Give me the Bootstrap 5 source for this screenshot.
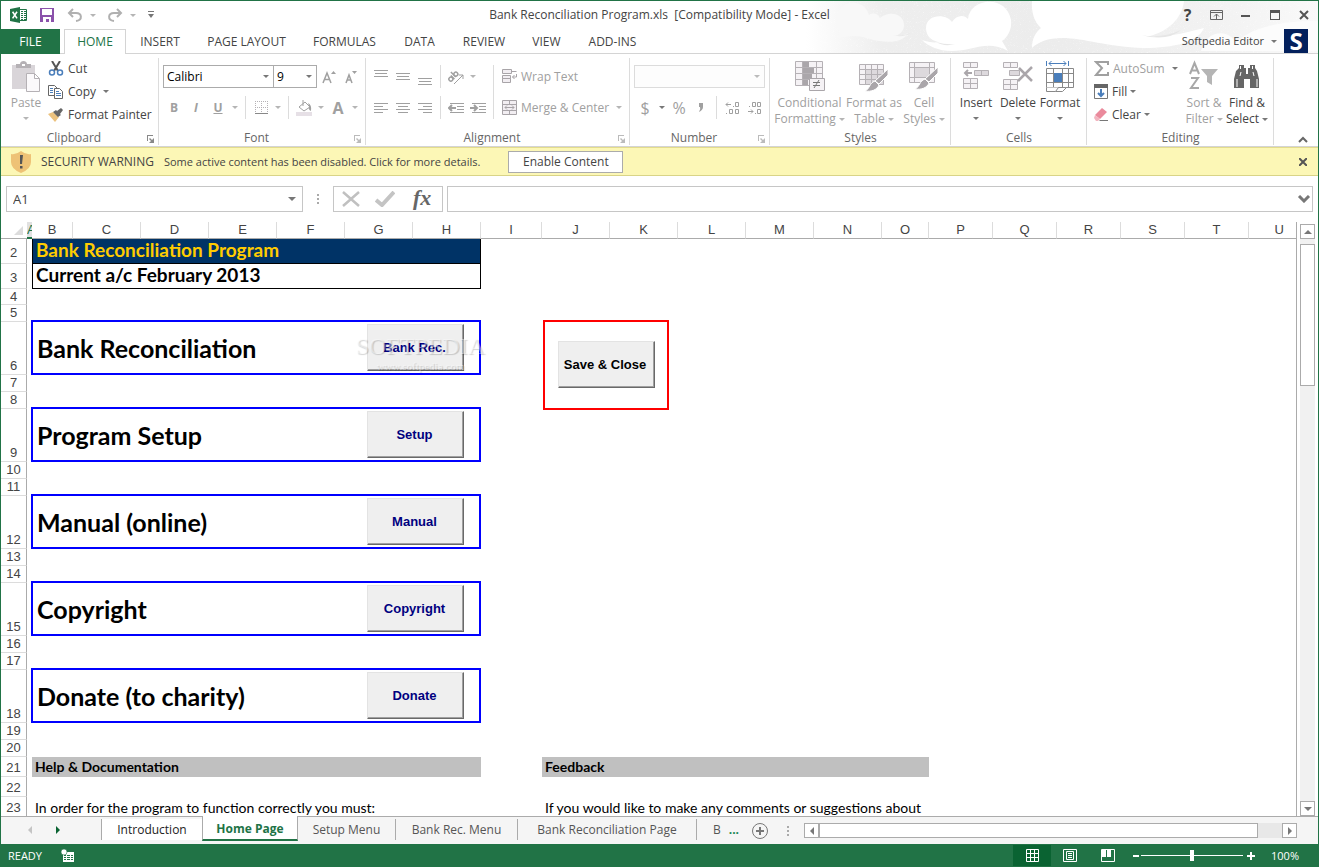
<!DOCTYPE html>
<html lang="en">
<head>
<meta charset="utf-8">
<meta name="viewport" content="width=device-width, initial-scale=1">
<title>Bank Reconciliation Program.xls [Compatibility Mode] - Excel</title>
<link href="https://cdn.jsdelivr.net/npm/bootstrap@5.3.0/dist/css/bootstrap.min.css" rel="stylesheet">
<style>
:root{--green:#217346;--line:#d4d4d4;--dim:#a0a0a0;--ink:#444}
body{font:12px/16px "Open Sans","Noto Sans",sans-serif;color:var(--ink);background:#fff}
.app{border:1px solid var(--green);border-bottom:0}
button,select,input{font:inherit;color:inherit}
.flat{background:none;border:0;padding:0}
.flat:disabled,.dim{color:var(--dim)}
svg{display:block;flex:none}
.dd{width:12px;flex:none;display:flex;justify-content:center}
.dd::after,.caret::after{content:"";border:3px solid transparent;border-top-color:#777;border-bottom:0}
.dim .dd::after,.dd.dim::after,.dim.caret::after{border-top-color:#b5b5b5}
.dim .dd.strong::after{border-top-color:#777}
.caret{display:inline-flex;align-items:center;justify-content:center;gap:3px}
/* title bar */
.topband{background:#fff}
.clouds{right:0;top:0;width:512px;height:52px;z-index:0}
.titlebar{grid-template-columns:1fr auto 1fr;height:28px}
.qat{padding-left:6px}
.w16{width:24px}.wbtn{width:29px;height:28px}
.ctr{display:flex;align-items:center;justify-content:center}
.tabrow{height:25px;border-bottom:1px solid var(--line)}
.rtabs{display:grid;grid-template-columns:59px 4px 62px 68px 105px 91px 59px 70px 55px 77px}
.rtabs a{color:var(--ink);text-decoration:none;display:flex;align-items:center;justify-content:center;height:25px}
.rtabs a.file{background:var(--green);color:#fff}
.rtabs a.on{background:#fff;color:var(--green);border:1px solid var(--line);border-bottom:0}
.who{padding-right:10px}
.slogo{width:24px;height:24px;background:#03205c;color:#fff;font:bold 24px/24px "Open Sans",sans-serif}
/* ribbon */
.ribbon{display:grid;grid-template-columns:158px 207px 264px 140px 181px 136px 187px 1fr;height:93px;border-bottom:1px solid var(--line)}
.rgroup{display:flex;flex-direction:column;justify-content:space-between;position:relative;padding-bottom:3px}
.rgroup:not(:last-child)::after{content:"";position:absolute;right:0;top:4px;bottom:4px;width:1px;background:#dcdcdc}
.gname{text-align:center;color:#666;height:16px;position:relative}
.gname span{padding-right:12px}
.launch{position:absolute;right:4px;top:5px}
.srow{height:23px;display:flex;align-items:center}
.pad3{padding:3px 0 0 3px}.padb{padding:3px 0 0 5px}.pade{padding:3px 0 0 7px}.pad4{padding:11px 0 0 4px}.gap8{gap:8px}
.ib{width:22px;height:22px}
.vsep{width:1px;background:#dcdcdc;margin:0 4px;align-self:stretch}
.big{display:flex;flex-direction:column;align-items:center;line-height:16px;height:73px}
.big svg{margin:4px 0 3px;overflow:visible}
.big .caret:empty{height:14px}
.w40{width:40px}.w42{width:42px}.w44{width:44px}.w60{width:60px}.w69{width:69px}
.sbtn{display:flex;align-items:center;gap:4px;text-align:left;height:23px}
.combo{appearance:none;border:1px solid #ababab;border-radius:0;height:23px;padding:0 14px 0 3px;color:#000;opacity:1;
 background:#fff url("data:image/svg+xml,%3Csvg xmlns='http://www.w3.org/2000/svg' width='6' height='3'%3E%3Cpath d='M0 0h6L3 3z' fill='%23777'/%3E%3C/svg%3E") no-repeat right 4px center}
.combo:disabled{border-color:#dcdcdc;background-color:#fdfdfd;background-image:url("data:image/svg+xml,%3Csvg xmlns='http://www.w3.org/2000/svg' width='6' height='3'%3E%3Cpath d='M0 0h6L3 3z' fill='%23bbb'/%3E%3C/svg%3E")}
.cfont{width:111px}.csize{width:44px;margin-left:-1px;margin-right:1px}.cnum{width:131px}
.stack{width:89px}
/* message bar */
.msgbar{height:29px;background:#fcf7b6;border-top:1px solid #e3dc8c;border-bottom:1px solid #d9d487;padding:0 1px 0 10px}
.msgtitle{margin:0 10px}
.enable{background:#fff;border:1px solid #ababab;width:115px;height:22px;margin-left:28px}
/* formula bar */
.fbar{height:46px;padding:10px 5px}
.fbox{border:1px solid #c6c6c6;height:26px;background:#fff}
.namebox{width:297px}
.namebox input,.fx input{border:0;outline:0;width:100%;min-width:0;background:none;font-size:13px}
.fxb{width:110px}
/* sheet */
.sheetarea{min-height:0}
.gridwrap{background:#fff;min-width:0}
.sheet{table-layout:fixed;width:100%;border-collapse:separate;border-spacing:0}
.sheet th{font:13px/16px "Liberation Sans",Arial,sans-serif;text-align:center;color:#444;padding:0}
.sheet thead th{height:17px;border-bottom:1px solid #ababab;border-right:1px solid #dcdcdc;overflow:hidden}
.sheet thead th:first-child{border-right:0}
.sheet thead th:last-child{border-right:0}
.sheet thead th.sel{background:#e1e1e1;color:var(--green);border-right:0;border-bottom:2px solid var(--green);line-height:15px}
.sheet tbody th{border-bottom:1px solid #dcdcdc;border-right:1px solid #ababab;vertical-align:bottom;line-height:17px}
.sheet td{padding:0;font-family:Lato,"Open Sans",sans-serif;color:#000;white-space:nowrap;vertical-align:bottom}
.h16{height:16px}.h17{height:17px}.h20{height:20px}.h25{height:25px}.h53{height:53px}
.sheet tbody .h16 th{line-height:15px}
.sheet tbody .h17 th{line-height:16px}
.sheet tbody .h25 th{padding-bottom:2px}
.sheet td.ttl,.sheet td.sub{font:bold 19px/21px Lato,sans-serif;border:1px solid #000;border-top:0;padding:0 0 3px 3px}
.sheet td.ttl{background:#036;color:#fc0}
.item{border:2px solid #00f;height:55px;margin:-2px 0 0 -1px;padding:0 15px 0 4px;font:bold 25px/30px Lato,sans-serif;display:flex;align-items:center;justify-content:space-between;position:relative}
.ole{width:97px;height:47px;background:#efefef;border:1px solid;border-color:#e3e3e3 #696969 #696969 #e3e3e3;box-shadow:inset -1px -1px #a0a0a0;font:bold 13px/16px "Liberation Sans",Arial,sans-serif;color:#000080;padding:0 2px 0 0}
.redbox{width:126px;height:90px;border:2px solid #f00;margin:-2px 0 -1px 1px;padding-bottom:1px}
.sheet td.head{background:#c0c0c0;font-weight:bold;font-size:14px;line-height:20px;padding-left:3px}
.sheet td.txt{font-size:14px;line-height:19px;padding-left:3px}
.wmark{right:-6px;top:11px;text-align:center;color:rgba(255,255,255,.45);text-shadow:1px 1px 1px rgba(0,0,0,.18);font:24px/26px "Liberation Serif",serif;pointer-events:none}
.wmark small{display:block;font-size:11px;line-height:14px}
.vscroll{width:22px;padding:2px 4px 0 3px;border-left:1px solid #ababab}
.sb{border:1px solid #ababab;background:#fff;padding:0}
.vscroll .sb{width:15px;height:15px}
.vtrack{background:#f1f1f1;padding-top:5px;width:15px}
.vscroll .vthumb{height:142px}
/* sheet tabs */
.sheettabs{height:28px;background:#f5f5f5;border-top:1px solid #ababab;padding-right:21px}
.st{height:21px;margin-top:2px;border-right:1px solid #ababab;color:#555;text-decoration:none;display:flex;align-items:center;justify-content:center;font-size:12px}
.navs{width:101px;padding-left:26px;gap:22px}
.t1{width:100px;background:#fff;color:#222;border:0}
.t2{width:96px;background:#fff;color:var(--green);font-weight:bold;border:1px solid #ababab;border-top:0;border-bottom:2px solid var(--green);height:25px;margin-top:-1px;padding-top:3px}
.t3{width:98px}.t4{width:122px}.t5{width:179px}
.newsheet{margin:0 6px 0 13px}
.hscroll{height:15px}.hscroll .sb{width:15px;height:15px}
.hscroll .hthumb{width:auto;flex:1 1 auto}
.htrack{width:24px;background:#e8e8e8}
/* status bar */
.statusbar{height:23px;background:var(--green);color:#fff;padding:0 19px 0 7px}
.macro{margin-left:19px}
.vw{width:38px;height:21px}.vw.on{background:#0a6332}
.zoomr{appearance:none;width:102px;height:12px;background:linear-gradient(#fff,#fff) center/100% 1px no-repeat}
.zoomr::-webkit-slider-thumb{appearance:none;width:4px;height:11px;background:#fff}
.f11{font-size:11px}
</style>
</head>
<body>
<div class="app d-flex flex-column vh-100 overflow-hidden">

<header class="topband position-relative">
  <svg class="clouds position-absolute" viewBox="0 0 512 52" aria-hidden="true">
    <defs><linearGradient id="sky"><stop offset="0" stop-color="#fff"/><stop offset=".15" stop-color="#eee"/><stop offset=".5" stop-color="#ececec"/><stop offset=".8" stop-color="#f2f2f2"/><stop offset="1" stop-color="#f9f9f9"/></linearGradient>
    <filter id="grain"><feTurbulence baseFrequency=".7" numOctaves="2"/><feColorMatrix values="0 0 0 0 1  0 0 0 0 1  0 0 0 0 1  3 0 0 0 -1.2"/></filter></defs>
    <path fill="url(#sky)" d="M0 0h512v52H0z"/>
    <path filter="url(#grain)" opacity=".5" d="M0 0h512v52H0z"/>
    <path fill="#f8f8f8" d="M30 20C30-2 58-4 63 14c5-3 9-1 11 3 10-8 24-4 24 7 0 6-4 9-8 11 5 0 9-1 12-3-5 11-24 10-38 6-12-4-22-4-33 0 2-5 4-6 2-8-3-3-3-6-3-10z"/>
    <path fill="#fff" d="M120 27c0-14 20-15 26-6 4-7 12-8 16-3C164-3 200-7 205 19c1 9-3 17-9 21l6 10c-20-12-36 0-56 0-14 0-24-5-30-11 6 2 12 3 16 2-8-2-12-7-12-14z"/>
    <path fill="#fff" d="M226 0h152c-2 18-16 30-34 35 14 1 26-1 38-4l16-4c-6 14-30 20-60 20-36-1-60-10-82-10-14 0-24 4-30 10 0-10 4-16 9-20-7-6-10-17-9-27z"/>
    <path fill="#fcfcfc" d="M395 50c5-22 30-22 34-8 10-8 26-22 83-22v30z"/>
    <path fill="#e6e6e6" d="M335 34q20 4 40-5-14 12-40 5zM85 34q10 2 20-2-8 5-20 2zM130 41q10 3 20 2-12 3-20-2z"/>
  </svg>
  <div class="titlebar d-grid align-items-center position-relative">
    <div class="qat d-flex align-items-center">
      <span class="w16 ctr"><svg width="18" height="16" viewBox="0 0 18 16"><path fill="#fff" stroke="#217346" d="M9.500 2.500h7v11h-7z"/><path fill="#217346" d="M0 2l10-2v16L0 14zM11 4h2v1h-2zm3 0h2v1h-2zm-3 2h2v1h-2zm3 0h2v1h-2zm-3 2h2v1h-2zm3 0h2v1h-2zm-3 2h2v1h-2zm3 0h2v1h-2zM11 12h2v1h-2zm3 0h2v1h-2z"/><path stroke="#fff" stroke-width="1.600" d="M2.600 4.800l4.400 6.600m0-6.600l-4.400 6.600"/></svg></span>
      <button class="flat ctr ms-1 w16" aria-label="Save"><svg width="14" height="14"><path fill="#8b52ab" fill-rule="evenodd" d="M0 0h14v14H0zM2 1h10v6H2zm1 8h8v5H9v-3H6v3H3z"/></svg></button>
      <button class="flat ctr ms-1 w16" aria-label="Undo"><svg width="16" height="14" fill="none" stroke="#b0b0b0" stroke-width="2"><path d="M6 1L2 5l4 4M2 5h7c6 0 7 7 0 8"/></svg></button><span class="dd dim"></span>
      <button class="flat ctr ms-1 w16" aria-label="Redo"><svg width="16" height="14" fill="none" stroke="#b0b0b0" stroke-width="2"><path d="M10 1l4 4-4 4m4-4H7c-6 0-7 7 0 8"/></svg></button><span class="dd dim"></span>
      <button class="flat ctr ms-1" aria-label="Customize Quick Access Toolbar"><svg width="14" height="8"><path fill="#777" d="M5 0h6v1H5zM5 3h6L8 7z"/></svg></button>
    </div>
    <div class="text-nowrap">Bank Reconciliation Program.xls&nbsp; [Compatibility Mode] - Excel</div>
    <div class="d-flex justify-content-end">
      <button class="flat wbtn ctr" aria-label="Help"><b class="fs-6">?</b></button>
      <button class="flat wbtn ctr" aria-label="Ribbon display options"><svg width="14" height="11" fill="none" stroke="#666"><path d="M.5.5h12v9H.5zM.5 2.500h12M6.500 9V4M4 6.500L6.500 4 9 6.500"/></svg></button>
      <button class="flat wbtn ctr" aria-label="Minimize"><svg width="10" height="10"><path fill="#555" d="M0 5h9v2H0z"/></svg></button>
      <button class="flat wbtn ctr" aria-label="Maximize"><svg width="10" height="10"><path fill="#555" fill-rule="evenodd" d="M0 0h10v10H0zM1 3h8v6H1z"/></svg></button>
      <button class="flat wbtn ctr" aria-label="Close"><svg width="10" height="10" stroke="#555" stroke-width="2"><path d="M1 1l8 8m0-8L1 9"/></svg></button>
    </div>
  </div>
  <div class="tabrow d-flex justify-content-between position-relative">
    <nav class="rtabs"><a class="file" href="#">FILE</a><span></span><a class="on" href="#">HOME</a><a href="#">INSERT</a><a href="#">PAGE LAYOUT</a><a href="#">FORMULAS</a><a href="#">DATA</a><a href="#">REVIEW</a><a href="#">VIEW</a><a href="#">ADD-INS</a></nav>
    <button class="flat who f11 d-flex align-items-center">Softpedia Editor<span class="dd mx-1"></span><span class="slogo">S</span></button>
  </div>
</header>

<div class="ribbon">
  <section class="rgroup">
    <div class="d-flex pad3">
      <button class="flat big w44" disabled><svg width="30" height="31" fill="none"><path fill="#d9d5d9" d="M1 4h23v24H1z"/><path fill="#b5b1b5" d="M5 7V3h4c0-4 7-4 7 0h4v4z"/><path fill="#fff" d="M11 3h3v2h-3z"/><path fill="#fbf9fb" stroke="#b5b1b5" d="M15.500 12.500h8l5 5v13h-13zM23.500 12.500v5h5"/></svg>Paste<span class="caret dim"></span></button>
      <div>
        <button class="flat sbtn"><svg width="16" height="15" fill="none"><path stroke="#555" stroke-width="2" d="M4 0l6 10M12 0L6 10"/><circle cx="4" cy="11.500" r="2.500" stroke="#4a7ebb" stroke-width="1.500"/><circle cx="12" cy="11.500" r="2.500" stroke="#4a7ebb" stroke-width="1.500"/></svg>Cut</button>
        <button class="flat sbtn"><svg width="16" height="14" fill="#fff" stroke="#666"><path d="M.5.5h6l3 3v7h-9z"/><path d="M6.500 3.500h5l3 3v7h-8z"/><path stroke="#4a7ebb" d="M2 3.500h3M2 5.500h3M2 7.500h3M8 8.500h5M8 10.500h5M8 6.500h3"/></svg>Copy<span class="dd"></span></button>
        <button class="flat sbtn"><svg width="16" height="14"><path fill="#ecc27e" d="M0 6l5-2 6 5-4 5z"/><path fill="#666" d="M5 4l3-2 5 5-3 2zM9 3l4-3 2 2-3 4z"/></svg>Format Painter</button>
      </div>
    </div>
    <div class="gname"><span>Clipboard</span><svg class="launch" width="8" height="8"><path fill="#888" d="M0 0h6v1H1v5H0zM7 3v5H2l2-2-2-2 1-1 2 2z"/></svg></div>
  </section>

  <section class="rgroup">
    <div class="pad4 d-flex flex-column gap8">
      <div class="srow">
        <select class="combo cfont" aria-label="Font"><option>Calibri</option></select><select class="combo csize" aria-label="Font size"><option>9</option></select>
        <button class="flat ib ctr" disabled aria-label="Increase font size"><svg width="14" height="14" fill="none" stroke="#a0a0a0" stroke-width="1.500"><path d="M1 13L5 3l4 10M2.500 9.500h5"/><path fill="#a0a0a0" stroke="none" d="M9 4h5l-2.500-3z"/></svg></button>
        <button class="flat ib ctr" disabled aria-label="Decrease font size"><svg width="12" height="14" fill="none" stroke="#a0a0a0" stroke-width="1.500"><path d="M1 13l3-8 3 8M2 10h4"/><path fill="#a0a0a0" stroke="none" d="M7 1h5L9.500 4z"/></svg></button>
      </div>
      <div class="srow dim">
        <button class="flat ib" disabled><b>B</b></button><button class="flat ib" disabled><b><i>I</i></b></button><button class="flat ib" disabled><b><u>U</u></b></button><span class="dd"></span><span class="vsep"></span>
        <button class="flat ib ctr" disabled aria-label="Borders"><svg width="13" height="13" fill="none" stroke="#b5b1b5"><path stroke-dasharray="1 1" d="M.5 0v12M6.500 0v12M12.500 0v12M0 .5h13M0 6.500h13"/><path stroke="#888" d="M0 12.500h13"/></svg></button><span class="dd"></span><span class="vsep"></span>
        <button class="flat ib ctr" disabled aria-label="Fill color"><svg width="17" height="16" fill="none" stroke="#a0a0a0"><path d="M3 7l6-5 5 5-6 4zM7 6V0"/><path fill="#a0a0a0" stroke="none" d="M12 3q4 2 3 8-3-1-2-5z"/><path fill="#e6e0e6" stroke="none" d="M0 12h16v4H0z"/></svg></button><span class="dd"></span>
        <button class="flat ib fs-6" disabled><b>A</b></button><span class="dd"></span>
      </div>
    </div>
    <div class="gname"><span>Font</span><svg class="launch" width="8" height="8"><path fill="#bbb" d="M0 0h6v1H1v5H0zM7 3v5H2l2-2-2-2 1-1 2 2z"/></svg></div>
  </section>

  <section class="rgroup">
    <div class="pad4 d-flex dim">
      <div class="d-flex flex-column gap8">
        <div class="srow">
          <button class="flat ib ctr" disabled aria-label="Top align"><svg width="14" height="16" stroke="#a0a0a0"><path d="M0 1.500h14M1 4.500h12M0 7.500h14"/></svg></button><button class="flat ib ctr" disabled aria-label="Middle align"><svg width="14" height="16" stroke="#a0a0a0"><path d="M0 4.500h14M1 7.500h12M0 10.500h14"/></svg></button><button class="flat ib ctr" disabled aria-label="Bottom align"><svg width="14" height="16" stroke="#a0a0a0"><path d="M0 9.500h14M1 12.500h12M0 15.500h14"/></svg></button><span class="vsep"></span>
          <button class="flat ib ctr" disabled aria-label="Orientation"><svg width="18" height="16" fill="none" stroke="#a0a0a0"><path d="M7 15l9-9M12 6h4v4"/><g stroke-width="1.500" transform="rotate(-45 6 8)"><circle cx="3" cy="8" r="2"/><path d="M5.500 5.500v5M8 3v7"/><circle cx="10" cy="8" r="2"/></g></svg></button><span class="dd"></span>
        </div>
        <div class="srow">
          <button class="flat ib ctr" disabled aria-label="Align left"><svg width="14" height="12" stroke="#a0a0a0"><path d="M0 1.500h14M0 4.500h9M0 7.500h14M0 10.500h9"/></svg></button><button class="flat ib ctr" disabled aria-label="Center"><svg width="14" height="12" stroke="#a0a0a0"><path d="M0 1.500h14M2 4.500h10M0 7.500h14M2 10.500h10"/></svg></button><button class="flat ib ctr" disabled aria-label="Align right"><svg width="14" height="12" stroke="#a0a0a0"><path d="M0 1.500h14M5 4.500h9M0 7.500h14M5 10.500h9"/></svg></button><span class="vsep"></span>
          <button class="flat ib ctr" disabled aria-label="Decrease indent"><svg width="16" height="12" fill="none" stroke="#a0a0a0"><path d="M2 1.500h14M9 4.500h7M9 7.500h7M2 10.500h14"/><path stroke-width="2" d="M8 6H1m3-3L1 6l3 3"/></svg></button><button class="flat ib ctr" disabled aria-label="Increase indent"><svg width="16" height="12" fill="none" stroke="#a0a0a0"><path d="M2 1.500h14M9 4.500h7M9 7.500h7M2 10.500h14"/><path stroke-width="2" d="M0 6h7M4 3l3 3-3 3"/></svg></button>
        </div>
      </div>
      <span class="vsep"></span>
      <div class="d-flex flex-column gap8 ms-1">
        <button class="flat sbtn" disabled><svg width="15" height="15" fill="#f2eef2" stroke="#a8a4a8"><path d="M.5.5h9v4h-9zM.5 6.500h8v3h-8zM.5 9.500h8v4h-8zM9.500 2.500h5"/><path fill="none" d="M14.500 5v3h-4m2-2l-2 2 2 2"/></svg>Wrap Text</button>
        <button class="flat sbtn" disabled><svg width="15" height="15" fill="#f2eef2" stroke="#a8a4a8"><path d="M.5.5h14v14H.5zM.5 4.500h14M.5 10.500h14M7.500.5v4M7.500 10.500v4M3 7.500h9M5 5.500l-2 2 2 2m5-4l2 2-2 2"/></svg>Merge &amp; Center<span class="dd"></span></button>
      </div>
    </div>
    <div class="gname"><span>Alignment</span><svg class="launch" width="8" height="8"><path fill="#bbb" d="M0 0h6v1H1v5H0zM7 3v5H2l2-2-2-2 1-1 2 2z"/></svg></div>
  </section>

  <section class="rgroup">
    <div class="pad4 d-flex flex-column gap8">
      <div class="srow"><select class="combo cnum" disabled aria-label="Number format"><option></option></select></div>
      <div class="srow">
        <button class="flat ib fs-6" disabled>$</button><span class="dd"></span><button class="flat ib fs-6" disabled>%</button><button class="flat ib ctr" disabled aria-label="Comma style"><svg width="6" height="9"><path fill="#a0a0a0" d="M1 0h4v4q0 3-4 5 2-3 1-5H1z"/></svg></button><span class="vsep"></span>
        <button class="flat ib ctr" disabled aria-label="Increase decimal"><svg width="15" height="14" fill="none" stroke="#a0a0a0"><path d="M6 3.500H1m2-2l-2 2 2 2M8 5.500h1M10.500 1.500h3v4h-3zM1 12.500h1M4.500 8.500h3v4h-3zM10.500 8.500h3v4h-3z"/></svg></button><button class="flat ib ctr" disabled aria-label="Decrease decimal"><svg width="15" height="14" fill="none" stroke="#a0a0a0"><path d="M1 10.500h5m-2-2l2 2-2 2M8 12.500h1M10.500 8.500h3v4h-3zM2 5.500h1M5.500 1.500h3v4h-3zM10.500 1.500h3v4h-3z"/></svg></button>
      </div>
    </div>
    <div class="gname"><span>Number</span><svg class="launch" width="8" height="8"><path fill="#bbb" d="M0 0h6v1H1v5H0zM7 3v5H2l2-2-2-2 1-1 2 2z"/></svg></div>
  </section>

  <section class="rgroup">
    <div class="d-flex padb">
      <button class="flat big w69" disabled><svg width="30" height="31" fill="#f5f2f5" stroke="#b5b1b5"><path d="M.5.5h27v24H.5zM.5 6.500h27M.5 12.500h27M.5 18.500h27M7.500.5v24M21.500.5v24"/><path fill="#aaa6aa" stroke="none" d="M8 1h6v5H8zm0 6h11v5H8zm0 6h9v5H8zm0 6h5v5H8z"/><path stroke="#aaa6aa" d="M14.500 17.500h15v12h-15z"/><path stroke="#777" d="M18 21.500h7M18 24.500h7M24 19l-5 8"/></svg>Conditional<span class="caret dim">Formatting</span></button>
      <button class="flat big w60" disabled><svg width="30" height="31" fill="#f5f2f5" stroke="#b5b1b5"><path d="M.5 3.500h24v20H.5zM.5 8.500h24M.5 13.500h24M.5 18.500h24M6.500 3.500v20M12.500 3.500v20M18.500 3.500v20"/><path fill="#ddd9dd" d="M6.500 8.500h18v15h-18z"/><path fill="none" d="M6.500 13.500h18M6.500 18.500h18M12.500 8.500v15M18.500 8.500v15"/><path fill="#aaa6aa" stroke="#fff" d="M29 8v6l-9 9-4-3zM16 20l4 4c-2 5-8 7-14 6 5-2 4-8 10-10z"/></svg>Format as<span class="caret dim">Table</span></button>
      <button class="flat big w40" disabled><svg width="30" height="31" fill="#f5f2f5" stroke="#b5b1b5"><path d="M.5 1.500h25v20H.5zM.5 6.500h25M.5 16.500h25M5.500 1.500v20M20.500 1.500v20"/><path fill="#ddd9dd" d="M5.500 6.500h15v10h-15z"/><path fill="#aaa6aa" stroke="#fff" d="M29 6v6l-9 9-4-3zM16 18l4 4c-2 5-8 7-14 6 5-2 4-8 10-10z"/></svg>Cell<span class="caret dim">Styles</span></button>
    </div>
    <div class="gname">Styles</div>
  </section>

  <section class="rgroup">
    <div class="d-flex padb">
      <button class="flat big w40"><svg width="28" height="31" fill="#f5f2f5" stroke="#b5b1b5"><path d="M1.500 1.500h14v5h-14zM8.500 1.500v5M1.500 17.500h14v10h-14zM1.500 22.500h14M8.500 17.500v10"/><path fill="#ddd9dd" d="M12.500 9.500h14v5h-14zM19.500 9.500v5"/><path fill="none" stroke="#aaa6aa" stroke-width="2" d="M10 12H3m3-3l-3 3 3 3"/></svg>Insert<span class="caret"></span></button>
      <button class="flat big w44"><svg width="30" height="31" fill="#f5f2f5" stroke="#b5b1b5"><path d="M.5 1.500h14v5H.5zM7.500 1.500v5M.5 18.500h14v10H.5zM.5 23.500h14M7.500 18.500v10"/><path fill="#ddd9dd" d="M6.500 9.500h10v5h-10z"/><path stroke="#aaa6aa" stroke-width="2.500" d="M16 7l13 13M29 6L15 20"/></svg>Delete<span class="caret"></span></button>
      <button class="flat big w40"><svg width="30" height="31" fill="#fff" stroke="#888"><path d="M1.500 7.500h27v19h-27zM1.500 12.500h27M1.500 21.500h27M8.500 7.500v19M17.500 7.500v19M23.500 7.500v19"/><path fill="#4a7ebb" stroke="none" d="M9 12h8v9H9z"/><path d="M1.500 26.500v4h9l3-4m-3 4h7l4-4"/><path fill="none" stroke="#4a7ebb" d="M1.500 0v5M23.500 0v5M4 2.500h17M6.500 0L4 2.500 6.500 5m12-5L21 2.500 18.500 5"/></svg>Format<span class="caret"></span></button>
    </div>
    <div class="gname">Cells</div>
  </section>

  <section class="rgroup">
    <div class="d-flex pade">
      <div class="stack">
        <button class="flat sbtn dim"><svg width="15" height="15" fill="none" stroke="#a0a0a0" stroke-width="2"><path d="M14 4V1H2l6 6-6 7h12v-3"/></svg>AutoSum<span class="dd strong"></span></button>
        <button class="flat sbtn"><svg width="14" height="15" fill="#fff" stroke="#777"><path d="M.5.5h13v14H.5z"/><path fill="#666" stroke="none" d="M0 0h14v4H0z"/><path fill="none" stroke="#4a7ebb" stroke-width="2" d="M7 5v7M4 9l3 3 3-3"/></svg><span class="caret">Fill</span></button>
        <button class="flat sbtn"><svg width="14" height="14"><path fill="#ea8a9c" d="M8 0l5 4-7 7-5-4z"/><path fill="#f3b5c0" d="M1 7l5 4-2 2H2L0 10z"/><path fill="#777" d="M6 12h8v1H5z"/></svg><span class="caret">Clear</span></button>
      </div>
      <button class="flat big w42" disabled><svg width="30" height="31" fill="none" stroke="#a8a8a8" stroke-width="2"><path d="M1 13L5.500 2 10 13M3 9.500h6M2 17h7L2 27h8"/><path fill="#b5b5b5" stroke="none" d="M12 8h17l-6 7v9l-5-3v-6z"/></svg>Sort &amp;<span class="caret dim">Filter</span></button>
      <button class="flat big w44"><svg width="28" height="31" fill="#666"><path d="M6 4h5v3h2v6h2V7h2V4h5v3l2 3 2 8v9h-9v-9h-6v9H1v-9l2-8 3-3z"/><path stroke="#fff" fill="none" d="M4 18v8M24 18v8M7.500 5v3M19.500 5v3M8 11l-1 4M20 11l1 4"/></svg>Find &amp;<span class="caret">Select</span></button>
    </div>
    <div class="gname">Editing</div>
  </section>
  <div class="d-flex align-items-end justify-content-end pb-1 pe-2"><button class="flat ctr" aria-label="Collapse the ribbon"><svg width="12" height="10" fill="none" stroke="#666" stroke-width="2"><path d="M1 7l4-4 4 4"/></svg></button></div>
</div>

<div class="msgbar d-flex align-items-center">
  <svg width="20" height="22"><path fill="#eec276" d="M10 0q5 4 10 3v8q0 7-10 11Q0 18 0 11V3q5 1 10-3z"/><path fill="#555" d="M9 4h3l-1 9H9zM9 15h2.500v2.500H9z"/></svg>
  <span class="msgtitle">SECURITY WARNING</span><span class="f11">Some active content has been disabled. Click for more details.</span>
  <button class="enable p-0">Enable Content</button>
  <button class="flat ctr ms-auto wbtn" aria-label="Close message"><svg width="8" height="8" stroke="#555" stroke-width="2"><path d="M0 0l8 8m0-8L0 8"/></svg></button>
</div>

<div class="fbar d-flex align-items-center">
  <div class="fbox namebox d-flex align-items-center ps-1 pe-1"><input type="text" value="A1" aria-label="Name box"><svg width="10" height="4"><path fill="#777" d="M0 0h8L4 4z"/></svg></div>
  <svg width="30" height="10"><path fill="#aaa" d="M14 0h2v2h-2zm0 4h2v2h-2zm0 4h2v2h-2z"/></svg>
  <div class="fbox fxb d-flex align-items-center justify-content-around">
    <button class="flat" aria-label="Cancel"><svg width="18" height="16" stroke="#c0c0c0" stroke-width="2.500"><path d="M1 1l16 14m0-14L1 15"/></svg></button>
    <button class="flat" aria-label="Enter"><svg width="20" height="16" fill="none" stroke="#c4c4c4" stroke-width="4"><path d="M1 9l6 5L19 1"/></svg></button>
    <button class="flat" aria-label="Insert function"><svg width="24" height="24"><text x="3" y="18" font-family="Liberation Serif" font-size="22" font-style="italic" font-weight="bold" fill="#666">fx</text></svg></button>
  </div>
  <div class="fbox fx flex-grow-1 ms-1 d-flex align-items-center"><input type="text" aria-label="Formula bar"><svg width="16" height="8" fill="none" stroke="#777" stroke-width="3"><path d="M3 1l5 5 5-5"/></svg></div>
</div>

<main class="sheetarea d-flex flex-grow-1 overflow-hidden">
  <div class="gridwrap flex-grow-1 overflow-hidden">
    <table class="sheet">
      <colgroup><col width="26"><col width="5"><col width="41"><col width="68"><col width="68"><col width="68"><col width="68"><col width="68"><col width="68"><col width="61"><col width="68"><col width="68"><col width="68"><col width="68"><col width="68"><col width="47"><col width="64"><col width="64"><col width="64"><col width="64"><col width="64"><col></colgroup>
      <thead><tr><th><svg class="ms-auto me-1" width="9" height="9"><path fill="#dcdcdc" d="M9 0v9H0z"/></svg></th><th class="sel">A</th><th>B</th><th>C</th><th>D</th><th>E</th><th>F</th><th>G</th><th>H</th><th>I</th><th>J</th><th>K</th><th>L</th><th>M</th><th>N</th><th>O</th><th>P</th><th>Q</th><th>R</th><th>S</th><th>T</th><th class="text-end"><span class="me-2 pe-1">U</span></th></tr></thead>
      <tbody>
        <tr class="h25"><th>2</th><td></td><td class="ttl" colspan="7">Bank Reconciliation Program</td><td colspan="13"></td></tr>
        <tr class="h25"><th>3</th><td></td><td class="sub" colspan="7">Current a/c February 2013</td><td colspan="13"></td></tr>
        <tr class="h16"><th>4</th><td colspan="21"></td></tr>
        <tr class="h17"><th>5</th><td colspan="21"></td></tr>
        <tr class="h53"><th>6</th><td></td><td colspan="7"><div class="item">Bank Reconciliation<button class="ole">Bank Rec.</button><div class="wmark position-absolute">SOFTPEDIA<small>www.softpedia.com</small></div></div></td><td></td><td colspan="2" rowspan="3" class="align-top"><div class="redbox d-flex align-items-center justify-content-center"><button class="ole text-black">Save &amp; Close</button></div></td><td colspan="10"></td></tr>
        <tr class="h17"><th>7</th><td colspan="9"></td><td colspan="10"></td></tr>
        <tr class="h17"><th>8</th><td colspan="9"></td><td colspan="10"></td></tr>
        <tr class="h53"><th>9</th><td></td><td colspan="7"><div class="item">Program Setup<button class="ole">Setup</button></div></td><td colspan="13"></td></tr>
        <tr class="h17"><th>10</th><td colspan="21"></td></tr>
        <tr class="h17"><th>11</th><td colspan="21"></td></tr>
        <tr class="h53"><th>12</th><td></td><td colspan="7"><div class="item">Manual (online)<button class="ole">Manual</button></div></td><td colspan="13"></td></tr>
        <tr class="h17"><th>13</th><td colspan="21"></td></tr>
        <tr class="h17"><th>14</th><td colspan="21"></td></tr>
        <tr class="h53"><th>15</th><td></td><td colspan="7"><div class="item">Copyright<button class="ole">Copyright</button></div></td><td colspan="13"></td></tr>
        <tr class="h17"><th>16</th><td colspan="21"></td></tr>
        <tr class="h17"><th>17</th><td colspan="21"></td></tr>
        <tr class="h53"><th>18</th><td></td><td colspan="7"><div class="item">Donate (to charity)<button class="ole">Donate</button></div></td><td colspan="13"></td></tr>
        <tr class="h17"><th>19</th><td colspan="21"></td></tr>
        <tr class="h17"><th>20</th><td colspan="21"></td></tr>
        <tr class="h20"><th>21</th><td></td><td class="head" colspan="7">Help &amp; Documentation</td><td></td><td class="head" colspan="6">Feedback</td><td colspan="6"></td></tr>
        <tr class="h20"><th>22</th><td colspan="21"></td></tr>
        <tr class="h20"><th>23</th><td></td><td class="txt" colspan="8">In order for the program to function correctly you must:</td><td class="txt" colspan="12">If you would like to make any comments or suggestions about</td></tr>
      </tbody>
    </table>
  </div>
  <div class="vscroll d-flex flex-column">
    <button class="sb ctr" aria-label="Scroll up"><svg width="8" height="4"><path fill="#777" d="M0 4h8L4 0z"/></svg></button>
    <div class="vtrack flex-grow-1"><div class="sb vthumb"></div></div>
    <button class="sb ctr" aria-label="Scroll down"><svg width="8" height="4"><path fill="#777" d="M0 0h8L4 4z"/></svg></button>
  </div>
</main>

<div class="sheettabs d-flex">
  <div class="st navs justify-content-start"><svg width="6" height="8"><path fill="#c4c4c4" d="M5 0v8L1 4z"/></svg><svg width="6" height="8"><path fill="#0a6332" d="M1 0v8l4-4z"/></svg></div>
  <a class="st t1" href="#">Introduction</a><a class="st t2" href="#">Home Page</a><a class="st t3" href="#">Setup Menu</a><a class="st t4" href="#">Bank Rec. Menu</a><a class="st t5" href="#">Bank Reconciliation Page</a>
  <a class="st border-0 ms-3" href="#">B</a><span class="st border-0 ms-2 text-success fw-bold">...</span>
  <button class="flat ctr newsheet" aria-label="New sheet"><svg width="16" height="16" fill="none" stroke="#777"><circle cx="8" cy="8" r="7.500"/><path stroke-width="2" d="M8 4v8M4 8h8"/></svg></button>
  <svg class="align-self-center" width="30" height="10"><path fill="#aaa" d="M13 0h2v2h-2zm0 4h2v2h-2zm0 4h2v2h-2z"/></svg>
  <div class="hscroll d-flex flex-grow-1 align-self-center"><button class="sb ctr" aria-label="Scroll left"><svg width="4" height="8"><path fill="#777" d="M4 0v8L0 4z"/></svg></button><div class="sb hthumb"></div><div class="htrack"></div><button class="sb ctr" aria-label="Scroll right"><svg width="4" height="8"><path fill="#777" d="M0 0v8l4-4z"/></svg></button></div>
</div>

<footer class="statusbar d-flex align-items-center">
  <span class="f11">READY</span>
  <svg class="macro" width="13" height="13"><path fill="#fff" fill-rule="evenodd" d="M2 3h11v10H2zM3 6v1h2V6zm3 0v1h3V6zm4 0v1h2V6zM3 8v1h2V8zm3 0v1h3V8zm4 0v1h2V8zM3 10v1h2v-1zm3 0v1h3v-1zm4 0v1h2v-1z"/><circle cx="3" cy="3" r="3" fill="#fff" stroke="#217346" stroke-width=".6"/></svg>
  <button class="flat vw on ctr ms-auto" aria-label="Normal"><svg width="13" height="13" fill="none" stroke="#fff"><path d="M.5.5h12v12H.5zM4.500 0v13M8.500 0v13M0 4.500h13M0 8.500h13"/></svg></button>
  <button class="flat vw ctr" aria-label="Page layout"><svg width="14" height="13" fill="none" stroke="#fff"><path d="M.5.5h13v12H.5zM3.500 2.500h7v8h-7zM5 4.500h4M5 6.500h4M5 8.500h4"/></svg></button>
  <button class="flat vw ctr" aria-label="Page break preview"><svg width="14" height="13" fill="none" stroke="#fff"><path d="M.5.5h13v12H.5z"/><path fill="#fff" stroke="none" d="M1 1h4v7H1zm5 0h4v7H6z"/></svg></button>
  <button class="flat ms-1" aria-label="Zoom out"><svg width="10" height="10"><path fill="#fff" d="M2 4h6v2H2z"/></svg></button>
  <input class="zoomr" type="range" min="10" max="190" value="100" aria-label="Zoom">
  <button class="flat ms-1 me-3" aria-label="Zoom in"><svg width="8" height="8"><path fill="#fff" d="M3 0h2v3h3v2H5v3H3V5H0V3h3z"/></svg></button>
  <span class="f11">100%</span>
</footer>
</div>
<script src="https://cdn.jsdelivr.net/npm/bootstrap@5.3.0/dist/js/bootstrap.bundle.min.js"></script>
</body>
</html>
